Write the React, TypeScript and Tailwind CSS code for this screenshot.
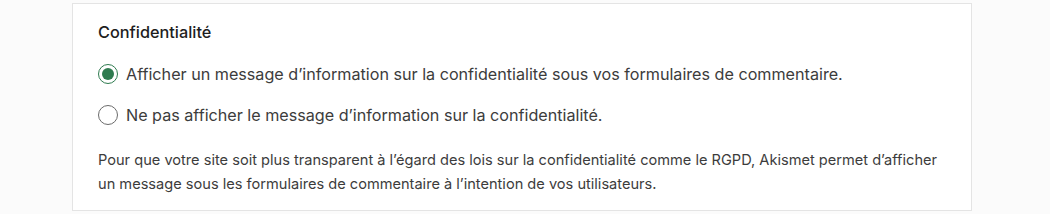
import React from "react";

type RadioProps = {
	checked?: boolean;
	label: string;
};

function Radio({ checked, label }: RadioProps) {
	return (
		<label className="flex items-center gap-[8px] text-[16.15px] leading-[20px] text-[#3c3c3c]">
			<span
				className={
					checked
						? "flex h-[20px] w-[20px] items-center justify-center rounded-full border-[1.5px] border-[#2f7b4f]"
						: "flex h-[20px] w-[20px] items-center justify-center rounded-full border-[1.5px] border-[#6b6b6b]"
				}
			>
				{checked && <span className="h-[12px] w-[12px] rounded-full bg-[#2f7b4f]" />}
			</span>
			{label}
		</label>
	);
}

export default function App() {
	return (
		<div className="h-[214px] w-[1050px] overflow-hidden bg-[#fbfbfb] pt-[3px] font-['Inter',sans-serif]">
			<div className="ml-[72px] w-[900px] border border-[#e4e4e4] bg-white pl-[25px] pr-6 pt-[18px] pb-[14px]">
				<h3 className="text-[16.3px] font-medium leading-[20px] text-[#1e1e1e]">Confidentialité</h3>
				<div className="mt-[22px] flex flex-col gap-[21px]">
					<Radio
						checked
						label="Afficher un message d’information sur la confidentialité sous vos formulaires de commentaire."
					/>
					<Radio label="Ne pas afficher le message d’information sur la confidentialité." />
				</div>
				<p className="mt-[23px] text-[14.6px] leading-[24px] text-[#3c3c3c]">
					Pour que votre site soit plus transparent à l’égard des lois sur la confidentialité comme le RGPD, Akismet permet d’afficher
					<br />
					un message sous les formulaires de commentaire à l’intention de vos utilisateurs.
				</p>
			</div>
		</div>
	);
}
